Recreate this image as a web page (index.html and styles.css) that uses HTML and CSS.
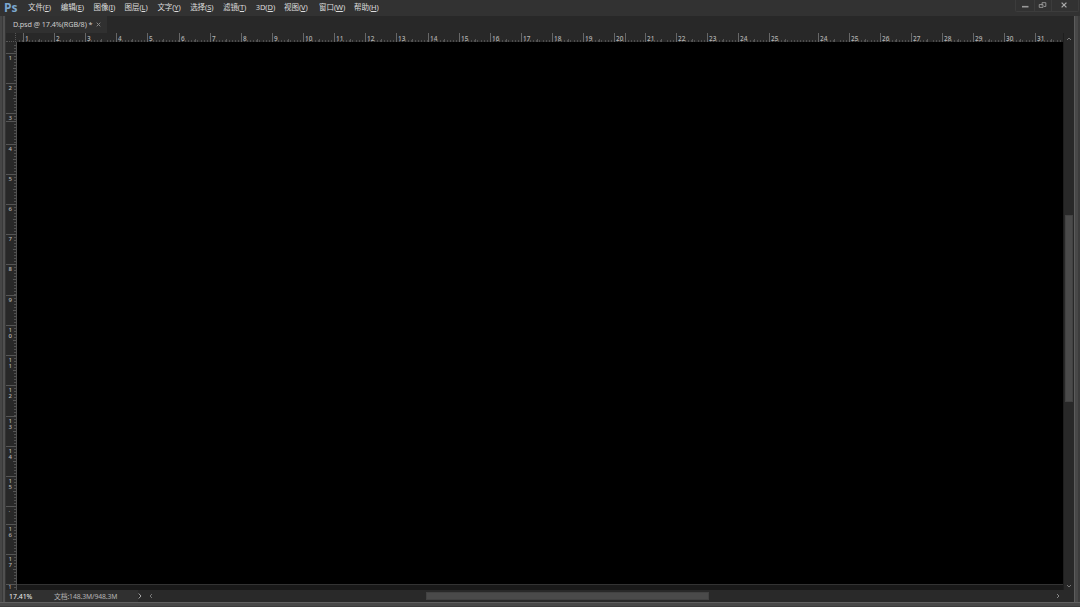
FILE: index.html
```html
<!DOCTYPE html>
<html lang="zh-CN">
<head>
    <meta charset="UTF-8">
    <title>D.psd</title>
    <link rel="stylesheet" href="styles.css">
</head>
<body>
    <div class="menu-bar">
        <span class="logo">Ps</span>
        <div class="menus">
            <span class="menu">文件(<u>F</u>)</span>
            <span class="menu">编辑(<u>E</u>)</span>
            <span class="menu narrow">图像(<u>I</u>)</span>
            <span class="menu">图层(<u>L</u>)</span>
            <span class="menu">文字(<u>Y</u>)</span>
            <span class="menu">选择(<u>S</u>)</span>
            <span class="menu">滤镜(<u>T</u>)</span>
            <span class="menu short">3D(<u>D</u>)</span>
            <span class="menu wide">视图(<u>V</u>)</span>
            <span class="menu wide">窗口(<u>W</u>)</span>
            <span class="menu">帮助(<u>H</u>)</span>
        </div>
        <div class="window-buttons">
            <svg width="18" height="11" viewBox="0 0 18 11"><path d="M6 6.7h6.5" stroke="#999" stroke-width="1.6"/></svg>
            <svg width="17" height="11" viewBox="0 0 17 11" fill="none" stroke="#999"><path d="M7.5 5.5v-3h4v4h-2M4.5 4.5h4v3h-4z"/></svg>
            <svg width="27" height="11" viewBox="0 0 27 11"><path d="M10 2.5l5 5M15 2.5l-5 5" stroke="#aaa" stroke-width="1.3"/></svg>
        </div>
    </div>
    <div class="workspace">
        <div class="edge"></div>
        <div class="document">
            <div class="tab-bar">
                <div class="tab">
                    <span class="tab-title">D.psd @ 17.4%(RGB/8) *</span>
                    <svg width="5" height="5" viewBox="0 0 5 5"><path d="M.7.7l3.6 3.6M4.3.7L.7 4.3" stroke="#888"/></svg>
                </div>
            </div>
            <div class="view">
                <div class="corner"></div>
                <div class="ruler top" id="top"></div>
                <div class="ruler left" id="left"></div>
                <div class="canvas"></div>
                <div class="scroll-y">
                    <svg width="6" height="4" viewBox="0 0 6 4"><path d="M1 3l2-2 2 2" fill="none" stroke="#777"/></svg>
                    <div class="track-y"><div class="thumb-y"></div></div>
                    <svg width="6" height="4" viewBox="0 0 6 4"><path d="M1 1l2 2 2-2" fill="none" stroke="#777"/></svg>
                </div>
            </div>
            <div class="status-bar">
                <span class="zoom">17.41%</span>
                <span class="size">文档:148.3M/948.3M</span>
                <svg class="more" width="4" height="6" viewBox="0 0 4 6"><path d="M.7.5L3 3 .7 5.5" fill="none" stroke="#aaa"/></svg>
                <svg width="4" height="6" viewBox="0 0 4 6"><path d="M3 1L1 3l2 2" fill="none" stroke="#777"/></svg>
                <div class="track-x"><div class="thumb-x"></div></div>
                <svg class="next" width="4" height="6" viewBox="0 0 4 6"><path d="M1 1l2 2-2 2" fill="none" stroke="#888"/></svg>
            </div>
        </div>
        <div class="edge right"></div>
    </div>
    <div class="bottom-edge"></div>
    <script>
        // [label, length of the unit in px]
        const top_units = [['', 7], ['1', 31], ['2', 31], ['3', 31], ['4', 31], ['5', 32], ['6', 31], ['7', 31], ['8', 31],
            ['9', 31], ['10', 31], ['11', 31], ['12', 31], ['13', 32], ['14', 31], ['15', 31], ['16', 31], ['17', 31],
            ['18', 31], ['19', 31], ['20', 11], ['', 20], ['21', 31], ['22', 31], ['23', 31], ['24', 31], ['25', 49],
            ['24', 31], ['25', 31], ['26', 31], ['27', 31], ['28', 31], ['29', 31], ['30', 31], ['31', 28]];
        const left_units = [['', 11], ['1', 30], ['2', 30], ['3', 8], ['', 23], ['4', 30], ['5', 30], ['6', 30], ['7', 30],
            ['8', 31], ['9', 30], ['10', 30], ['11', 30], ['12', 31], ['13', 30], ['14', 30], ['15', 30], ['·', 18],
            ['16', 30], ['17', 30], ['1', 6]];

        function drawRuler(id, units, side) {
            const ruler = document.getElementById(id);
            units.forEach(([label, length], i) => {
                const unit = document.createElement('div');
                unit.className = i === 0 ? 'unit first' : length > 25 ? 'unit half' : 'unit';
                unit.style[side] = length + 'px';
                unit.innerHTML = '<span>' + (side === 'height' ? label.split('').join('</span><span>') : label) + '</span>';
                ruler.appendChild(unit);
            });
        }

        drawRuler('top', top_units, 'width');
        drawRuler('left', left_units, 'height');
    </script>
</body>
</html>
```

FILE: styles.css
```css
* {
    box-sizing: border-box;
}
body {
    margin: 0;
    height: 607px;
    display: flex;
    flex-direction: column;
    overflow: hidden;
    background-color: #282828;
    color: #ccc;
    font-family: "Noto Sans", "Noto Sans CJK SC", sans-serif;
    font-size: 7px;
}
svg {
    display: block;
    flex: none;
}
.menu-bar {
    height: 16px;
    flex: none;
    display: flex;
    align-items: flex-start;
    background-color: #323232;
}
.logo {
    width: 28px;
    padding-left: 4px;
    font: bold 12px/15px "Open Sans", sans-serif;
    color: #7ba7cf;
}
.menus {
    display: flex;
    flex: 1;
    line-height: 15px;
    font-size: 7.5px;
    letter-spacing: -0.1px;
    color: #ddd;
    white-space: nowrap;
}
.menu {
    width: 32.8px;
}
.menu.narrow {
    width: 31px;
}
.menu.short {
    width: 28.3px;
}
.menu.wide {
    width: 35px;
}
.menus u {
    text-underline-offset: 1px;
}
.window-buttons {
    display: flex;
    margin-right: 1px;
    border: 1px solid #3c3c3c;
    border-top: none;
    border-radius: 0 0 2px 2px;
}
.window-buttons svg + svg {
    border-left: 1px solid #3c3c3c;
}
.workspace {
    height: 586px;
    flex: none;
    display: flex;
}
.edge {
    width: 6px;
    background: linear-gradient(90deg, #464646 2px, #3a3a3a 2px 3px, #505050 3px 5px, #343434 5px);
}
.edge.right {
    background: linear-gradient(90deg, #5c5c5c 1px, #484848 1px 4px, #3c3c3c 4px);
}
.document {
    width: 1068px;
    display: flex;
    flex-direction: column;
}
.tab-bar {
    height: 17px;
    display: flex;
}
.tab {
    width: 101px;
    padding: 0 0 1px 7px;
    display: flex;
    align-items: center;
    background-color: #303030;
}
.tab-title {
    width: 83px;
    font-size: 7.25px;
    letter-spacing: -0.1px;
    white-space: nowrap;
}
.view {
    height: 557px;
    display: grid;
    grid-template-columns: 10px 1047px 11px;
    grid-template-rows: 9px 548px;
}
.corner {
    border-right: 1px dotted #555;
    border-bottom: 1px dotted #555;
}
.ruler {
    display: flex;
    overflow: hidden;
    color: #b4b4b4;
    font: 500 6.4px/6px "Noto Sans", sans-serif;
}
.ruler.left {
    flex-direction: column;
    width: 11px;
    border-right: 1px solid #505050;
    font-size: 6px;
    line-height: 6px;
    z-index: 1;
}
.unit {
    flex: none;
}
.top .unit {
    border-left: 1px solid #666;
    padding: 3px 0 0 1px;
    background: repeating-linear-gradient(90deg, transparent 0 2px, #4c4c4c 2px 3px, transparent 3px 3.1px) 0 100% / 100% 2px no-repeat;
}
.top .half {
    background: linear-gradient(#555, #555) 15px 100% / 1px 3px no-repeat,
        repeating-linear-gradient(90deg, transparent 0 2px, #4c4c4c 2px 3px, transparent 3px 3.1px) 0 100% / 100% 2px no-repeat;
}
.left .unit {
    border-top: 1px solid #555;
    padding: 1px 0 0 2.5px;
    width: 11px;
    background: repeating-linear-gradient(transparent 0 2px, #505050 2px 3px) 8px 0 / 2px 100% no-repeat;
}
.left .half {
    background: linear-gradient(#555, #555) 7px 14px / 3px 1px no-repeat,
        repeating-linear-gradient(transparent 0 2px, #505050 2px 3px) 8px 0 / 2px 100% no-repeat;
}
.left .unit:last-child {
    padding-top: 0;
    font-size: 5px;
    line-height: 5px;
}
.ruler .first {
    border-color: transparent;
}
.unit span {
    display: block;
}
.canvas {
    height: 543px;
    margin-left: 1px;
    background-color: #000;
    border-bottom: 1px solid #333;
    box-shadow: 0 5px 0 #191919;
}
.scroll-y {
    grid-column: 3;
    grid-row: 1 / 3;
    display: flex;
    flex-direction: column;
    align-items: center;
    padding: 4px 1px 2px 0;
    border-left: 1px solid #1e1e1e;
}
.track-y {
    flex: 1;
    padding-top: 174px;
}
.thumb-y {
    width: 8px;
    height: 187px;
    background-color: #4a4a4a;
    border: 1px solid #424242;
}
.status-bar {
    height: 12px;
    display: flex;
    align-items: center;
    background-color: #292929;
}
.zoom {
    width: 29px;
    padding-left: 3px;
    line-height: 13px;
    background-color: #303030;
    color: #eee;
    font-size: 6.9px;
}
.size {
    width: 103px;
    padding-left: 19px;
    line-height: 13px;
    background-color: #303030;
    color: #b4b4b4;
    font-size: 6.8px;
    letter-spacing: -0.1px;
    white-space: nowrap;
}
.more {
    margin-right: 7px;
}
.track-x {
    flex: 1;
    padding-left: 273px;
}
.thumb-x {
    width: 283px;
    height: 8px;
    background-color: #4a4a4a;
    border: 1px solid #424242;
}
.next {
    margin-right: 14px;
}
.bottom-edge {
    height: 5px;
    background: linear-gradient(#606060 1px, #484848 1px 4px, #3c3c3c 4px);
}
```
